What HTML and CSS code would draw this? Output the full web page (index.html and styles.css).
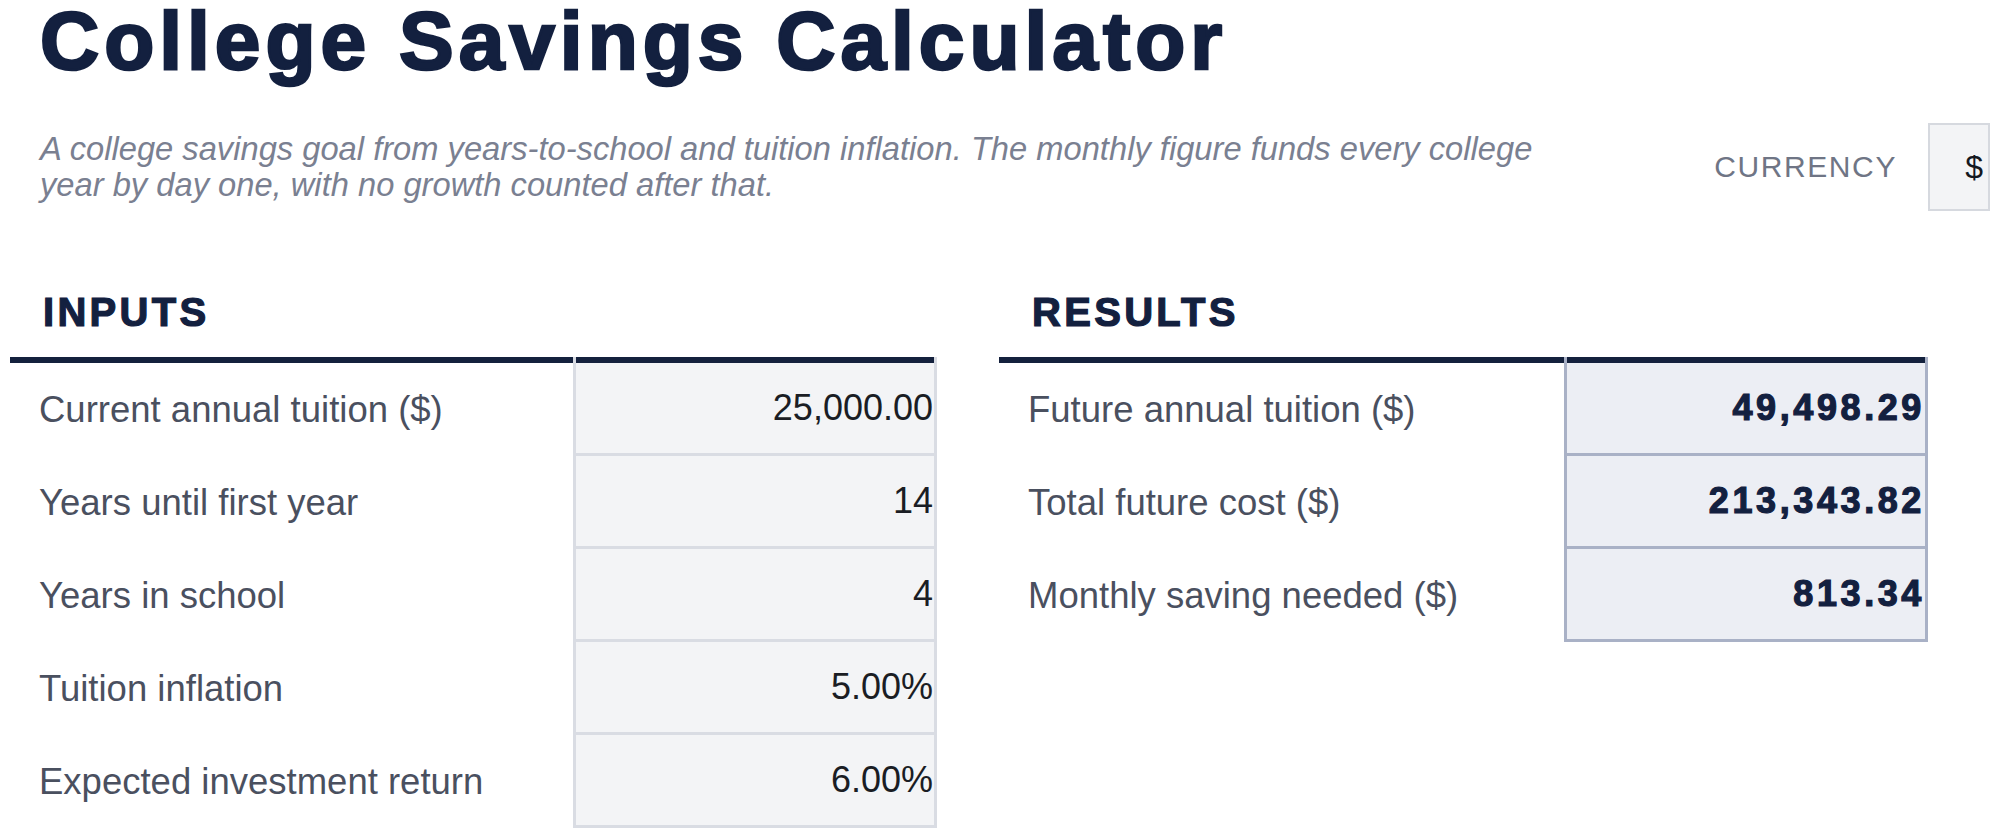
FILE: index.html
```html
<!DOCTYPE html>
<html lang="en">
<head>
<meta charset="utf-8">
<title>College Savings Calculator</title>
<link rel="stylesheet" href="styles.css">
</head>
<body>
<div class="page">
  <header class="header">
    <h1 class="title">College Savings Calculator</h1>
    <div class="header-row">
      <p class="subtitle">A college savings goal from years-to-school and tuition inflation. The monthly figure funds every college year by day one, with no growth counted after that.</p>
      <div class="currency">
        <span class="currency-label">CURRENCY</span>
        <span class="currency-box">$</span>
      </div>
    </div>
  </header>
  <main class="panels">
    <section class="panel panel-inputs">
      <h2 class="panel-title">INPUTS</h2>
      <div class="table table-inputs">
        <div class="label">Current annual tuition ($)</div>
        <div class="value">25,000.00</div>
        <div class="label">Years until first year</div>
        <div class="value">14</div>
        <div class="label">Years in school</div>
        <div class="value">4</div>
        <div class="label">Tuition inflation</div>
        <div class="value">5.00%</div>
        <div class="label">Expected investment return</div>
        <div class="value">6.00%</div>
      </div>
    </section>
    <section class="panel panel-results">
      <h2 class="panel-title">RESULTS</h2>
      <div class="table table-results">
        <div class="label">Future annual tuition ($)</div>
        <div class="value">49,498.29</div>
        <div class="label">Total future cost ($)</div>
        <div class="value">213,343.82</div>
        <div class="label">Monthly saving needed ($)</div>
        <div class="value">813.34</div>
      </div>
    </section>
  </main>
</div>
</body>
</html>
```

FILE: styles.css
```css
* { box-sizing: border-box; }

html, body {
  margin: 0;
  padding: 0;
  background: #ffffff;
}

body {
  font-family: "Liberation Sans", Arial, sans-serif;
  color: #1f2430;
  overflow: hidden;
}

.page {
  width: 2000px;
  padding: 0 10px;
}

.header {
  padding-left: 30px;
}

.title {
  margin: 0;
  font-size: 82px;
  line-height: 82px;
  font-weight: 700;
  letter-spacing: 5px;
  color: #13203f;
  -webkit-text-stroke: 2.6px #13203f;
  white-space: nowrap;
}

.header-row {
  margin-top: 41px;
  display: flex;
  align-items: center;
  justify-content: space-between;
  height: 88px;
}

.subtitle {
  margin: 0;
  max-width: 1545px;
  font-size: 32.7px;
  line-height: 36px;
  font-style: italic;
  color: #7a8091;
}

.currency {
  display: flex;
  align-items: center;
  gap: 31px;
}

.currency-label {
  font-size: 30px;
  letter-spacing: 1.6px;
  color: #6f7585;
}

.currency-box {
  width: 62px;
  height: 88px;
  display: flex;
  align-items: center;
  justify-content: flex-end;
  padding-right: 5px;
  background: #f3f4f6;
  border: 2px solid #d6d9df;
  font-size: 32px;
  color: #15181f;
}

.panels {
  margin-top: 77px;
  display: grid;
  grid-template-columns: 927px 929px;
  column-gap: 62px;
}

.panel-title {
  margin: 0 0 21px;
  padding-left: 33px;
  font-size: 40px;
  line-height: 48px;
  font-weight: 700;
  letter-spacing: 3.3px;
  color: #13203f;
  -webkit-text-stroke: 1.2px #13203f;
}

.table {
  display: grid;
}

.table-inputs { grid-template-columns: 563px 364px; }
.table-results { grid-template-columns: 565px 364px; }

.label {
  height: 93px;
  display: flex;
  align-items: center;
  padding-left: 29px;
  font-size: 36.5px;
  color: #4a505f;
  white-space: nowrap;
}

.value {
  height: 93px;
  display: flex;
  align-items: center;
  justify-content: flex-end;
  font-size: 36px;
  border: 3px solid #d9dce3;
  border-top: 0;
  background: #f3f4f6;
  color: #1a1d24;
  padding-right: 1px;
}

.label:nth-child(1) {
  height: 99px;
  border-top: 6px solid #14213d;
}

.value:nth-child(2) {
  height: 99px;
  padding-top: 6px;
  box-shadow: inset 0 6px 0 #14213d;
}

.table-results .value {
  background: #eceef4;
  border-color: #a9b1c6;
  font-weight: 700;
  color: #13203f;
  letter-spacing: 3.6px;
  -webkit-text-stroke: 1.2px #13203f;
  padding-right: 0;
}
```
